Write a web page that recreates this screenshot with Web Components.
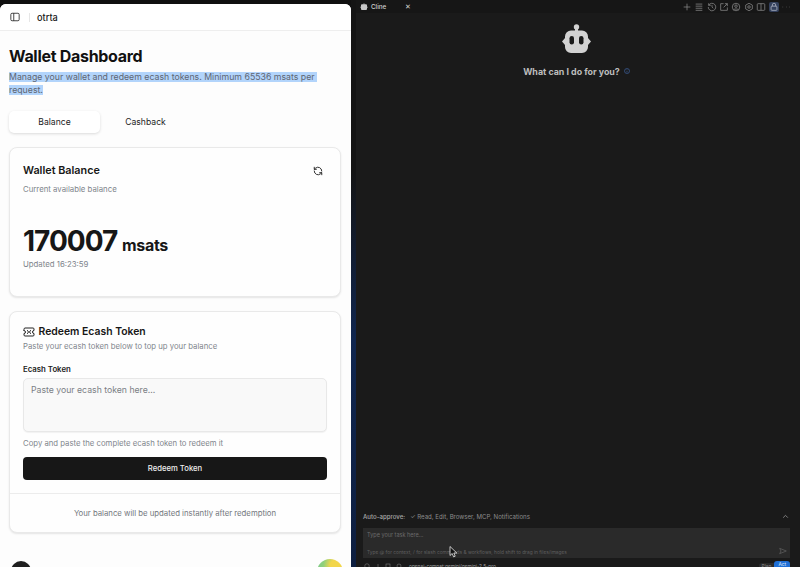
<!DOCTYPE html>
<html lang="en">
<head>
<meta charset="utf-8">
<title>Wallet Dashboard</title>
<style>
  html, body { margin: 0; height: 100%; background: #141414; overflow: hidden; }
  body { font-family: Inter, "Liberation Sans", sans-serif; }
</style>
</head>
<body>
<app-shell>
  <wallet-page slot="left">
    <wallet-header></wallet-header>
    <wallet-title></wallet-title>
    <wallet-tabs></wallet-tabs>
    <balance-card></balance-card>
    <redeem-card></redeem-card>
    <wallet-foot></wallet-foot>
  </wallet-page>
  <cline-panel slot="right">
    <cline-tabbar></cline-tabbar>
    <cline-welcome></cline-welcome>
    <cline-composer></cline-composer>
  </cline-panel>
</app-shell>
<script>
// each element is just a shadow root with a fixed template
function define(name, html) {
  const template = document.createElement('template');
  template.innerHTML = html;
  customElements.define(name, class extends HTMLElement {
    constructor() {
      super();
      this.attachShadow({ mode: 'open' });
      this.shadowRoot.appendChild(template.content.cloneNode(true));
    }
  });
}

define('app-shell', `
  <style>
    :host { display: flex; width: 800px; height: 567px; overflow: hidden; position: relative; background: #101010; }
    .left { width: 351px; padding-top: 4px; flex: none; box-sizing: border-box; }
    .gap { width: 5px; flex: none; background: linear-gradient(#141414 0, #141414 30%, #10264f 60%, #0e1f40 100%); }
    .right { flex: 1; min-width: 0; }
    svg { position: absolute; left: 449px; top: 546px; }
  </style>
  <div class="left"><slot name="left"></slot></div>
  <div class="gap"></div>
  <div class="right"><slot name="right"></slot></div>
  <svg width="9" height="12" viewBox="0 0 9 12"><path d="M1 0.5v9l2.2-2 1.4 3.4 1.6-.7-1.4-3.2h3z" fill="#111" stroke="#eee" stroke-width=".8"/></svg>
`);

define('wallet-page', `
  <style>
    :host { display: block; height: 563px; background: #fdfdfd; border-radius: 6px 6px 0 0; overflow: hidden; color: #171717; }
  </style>
  <slot></slot>
`);

define('wallet-header', `
  <style>
    :host { display: flex; align-items: center; height: 26px; border-bottom: 1px solid #eeeeee; padding-left: 10px; background: #fff; }
    svg { width: 10px; height: 10px; display: block; }
    i { width: 1px; height: 9px; background: #e6e6e6; margin: 0 7px 0 9px; }
    span { font-size: 9.2px; font-weight: 500; }
  </style>
  <svg viewBox="0 0 24 24" fill="none" stroke="#222" stroke-width="2"><rect x="2" y="3" width="20" height="18" rx="3"/><path d="M9 3v18"/></svg>
  <i></i><span>otrta</span>
`);

define('wallet-title', `
  <style>
    :host { display: block; padding: 14px 9px 0; }
    h1 { margin: 0; font-size: 16px; line-height: 22px; font-weight: 700; letter-spacing: -.3px; color: #111; }
    p { margin: 4px 0 0; font-size: 8.75px; line-height: 13px; color: #5f6672; width: 325px; }
    span { background: #b2d4fb; }
    .first { padding-right: 2px; }
  </style>
  <h1>Wallet Dashboard</h1>
  <p><span class="first">Manage your wallet and redeem ecash tokens. Minimum 65536 msats per</span> <span>request.</span></p>
`);

define('wallet-tabs', `
  <style>
    :host { display: flex; margin: 14px 9px 13.5px; font-size: 8.6px; color: #222; }
    div { width: 91px; height: 22px; display: flex; align-items: center; justify-content: center; border-radius: 5px; }
    .on { background: #fff; box-shadow: 0 1px 3px rgba(0,0,0,.14); }
  </style>
  <div class="on">Balance</div><div>Cashback</div>
`);

define('ui-card', `
  <style>
    :host { display: block; margin: 0 10px 14px 9px; border: 1px solid #e9e9e9; border-radius: 8px; background: #fefefe; box-shadow: 0 1px 2px rgba(0,0,0,.1); box-sizing: border-box; }
  </style>
  <slot></slot>
`);

define('balance-card', `
  <style>
    :host { display: block; }
    .in { height: 148px; padding: 15px 14px 0 13px; box-sizing: border-box; }
    .top { display: flex; justify-content: space-between; align-items: center; height: 16px; }
    h2 { margin: 0; font-size: 10.8px; font-weight: 600; }
    svg { width: 10px; height: 10px; margin-right: 3px; }
    p { margin: 0; font-size: 7.8px; color: #80858c; }
    .sub { margin-top: 4px; line-height: 12px; }
    .amount { margin-top: 31px; font-size: 28px; line-height: 30px; font-weight: 700; letter-spacing: -1px; color: #171717; }
    .amount small { font-size: 16px; letter-spacing: -.3px; margin-left: -1px; }
    .upd { line-height: 12px; margin-top: -2px; }
  </style>
  <ui-card>
    <div class="in">
      <div class="top">
        <h2>Wallet Balance</h2>
        <svg viewBox="0 0 24 24" fill="none" stroke="#222" stroke-width="2.2" stroke-linecap="round" stroke-linejoin="round"><path d="M21 12a9 9 0 0 0-15-6.700L3 8"/><path d="M3 3v5h5"/><path d="M3 12a9 9 0 0 0 15 6.700l3-2.700"/><path d="M16 16h5v5"/></svg>
      </div>
      <p class="sub">Current available balance</p>
      <div class="amount">170007 <small>msats</small></div>
      <p class="upd">Updated 16:23:59</p>
    </div>
  </ui-card>
`);

define('redeem-card', `
  <style>
    :host { display: block; }
    .in { padding: 13px 13px 13px; }
    .top { display: flex; align-items: center; gap: 4px; height: 14px; }
    svg { width: 12px; height: 12px; margin-left: -.5px; }
    h2 { margin: 0; font-size: 10.4px; font-weight: 600; }
    p { margin: 0; font-size: 7.75px; color: #80858c; }
    .sub { line-height: 12px; margin-top: 1px; }
    label { display: block; font-size: 7.8px; font-weight: 600; line-height: 12px; margin-top: 11px; color: #222; }
    .area { height: 54px; box-sizing: border-box; margin-top: 3px; padding: 5px 7px; border: 1px solid #e8e8e8; border-radius: 5px; background: #f9f9f9; box-shadow: 0 1px 1px rgba(0,0,0,.05); font-size: 8.7px; line-height: 13px; color: #7b7f85; }
    .help { line-height: 12px; margin-top: 5px; }
    .btn { display: flex; align-items: center; justify-content: center; height: 23px; margin-top: 8px; border-radius: 4px; background: #171717; color: #eee; font-size: 7.7px; font-weight: 500; }
    .foot { border-top: 1px solid #ececec; height: 39px; padding-top: 1px; box-sizing: border-box; display: flex; align-items: center; justify-content: center; font-size: 7.77px; color: #73777d; }
  </style>
  <ui-card>
    <div class="in">
      <div class="top">
        <svg viewBox="0 0 24 24" fill="none" stroke="#222" stroke-width="2" stroke-linecap="round" stroke-linejoin="round"><path d="M2 9a3 3 0 0 1 0 6v3a2 2 0 0 0 2 2h16a2 2 0 0 0 2-2v-3a3 3 0 0 1 0-6V6a2 2 0 0 0-2-2H4a2 2 0 0 0-2 2z"/><path d="M9 9l2 3-2 3M15 9l-2 3 2 3"/></svg>
        <h2>Redeem Ecash Token</h2>
      </div>
      <p class="sub">Paste your ecash token below to top up your balance</p>
      <label>Ecash Token</label>
      <div class="area">Paste your ecash token here...</div>
      <p class="help">Copy and paste the complete ecash token to redeem it</p>
      <div class="btn">Redeem Token</div>
    </div>
    <div class="foot">Your balance will be updated instantly after redemption</div>
  </ui-card>
`);

define('wallet-foot', `
  <style>
    :host { display: flex; justify-content: space-between; padding: 14px 8px 0 11px; }
    i { width: 20px; height: 20px; border-radius: 50%; background: #202020; }
    b { width: 26px; height: 26px; border-radius: 50%; margin-top: -2px; background: radial-gradient(circle at 75% 25%, #f2d64b 0 22%, #8fd07a 48%, #6cc4a0 100%); }
  </style>
  <i></i><b></b>
`);

define('cline-panel', `
  <style>
    :host { display: flex; flex-direction: column; height: 567px; background: #1a1a1a; color: #ccc; }
  </style>
  <slot></slot>
`);

define('cline-tabbar', `
  <style>
    :host { display: flex; align-items: center; height: 13px; padding-left: 4px; background: #161616; font-size: 6.3px; color: #d0d0d0; }
    .tab { display: flex; align-items: center; gap: 3px; width: 52px; height: 13px; font-weight: 500; position: relative; }
    .tab svg { width: 8px; height: 8px; }
    .x { position: absolute; left: 45px; font-size: 7px; }
    .tools { margin-left: auto; display: flex; align-items: center; gap: 2.4px; padding-right: 9px; }
    .tools svg { width: 10px; height: 10px; stroke: #8a8a8a; fill: none; stroke-width: 1.8; display: block; }
    .tools .on { background: #33405c; border-radius: 2px; }
    .tools .on svg { stroke: #b6bccb; }
  </style>
  <div class="tab">
    <svg viewBox="0 0 24 24" fill="#c8c8c8"><path d="M11 1h2v3h5a3 3 0 0 1 3 3v3l2 3-2 3v2a3 3 0 0 1-3 3H6a3 3 0 0 1-3-3v-2l-2-3 2-3V7a3 3 0 0 1 3-3h5z"/></svg>
    <span>Cline</span><span class="x">✕</span>
  </div>
  <div class="tools">
    <svg viewBox="0 0 24 24"><path d="M12 4v16M4 12h16"/></svg>
    <svg viewBox="0 0 24 24"><path d="M4 5h16M4 10h16M4 15h16M4 20h16"/></svg>
    <svg viewBox="0 0 24 24"><path d="M4 8a9 9 0 1 1-1 4M4 3v5h5M12 7v5l3 3"/></svg>
    <svg viewBox="0 0 24 24"><path d="M20 13v7H4V4h7M14 4h6v6M20 4l-9 9"/></svg>
    <svg viewBox="0 0 24 24"><circle cx="12" cy="12" r="9"/><circle cx="12" cy="10" r="3"/><path d="M6 19c1-3 11-3 12 0"/></svg>
    <svg viewBox="0 0 24 24"><path d="M12 3l8 4.500v9L12 21l-8-4.500v-9z"/><circle cx="12" cy="12" r="3"/></svg>
    <svg viewBox="0 0 24 24"><rect x="3" y="4" width="18" height="16" rx="2"/><path d="M12 4v16"/></svg>
    <span class="on"><svg viewBox="0 0 24 24"><rect x="5" y="10" width="14" height="10" rx="2"/><path d="M8 10V7a4 4 0 0 1 8 0v3"/></svg></span>
    <svg viewBox="0 0 24 24"><path d="M4 12h1M12 12h1M20 12h1"/></svg>
  </div>
`);

define('cline-welcome', `
  <style>
    :host { flex: 1; display: flex; flex-direction: column; align-items: center; padding: 11px 3px 0 0; }
    svg { width: 30px; height: 30px; display: block; }
    p { margin: 10.5px 0 0; display: flex; align-items: center; gap: 4px; font-size: 8.9px; line-height: 13px; font-weight: 700; color: #bdbdbd; }
    p svg { width: 6px; height: 6px; }
  </style>
  <svg viewBox="0 0 30 30"><circle cx="14.500" cy="3" r="2.700" fill="#d2d2d2"/><path fill="#d2d2d2" d="M13 4h3v3h-3z"/><path fill="#d2d2d2" d="M9 6.500h11a6 6 0 0 1 6 6v1.500l3 3.500-3 3.500v2a6 6 0 0 1-6 6H9a6 6 0 0 1-6-6v-2L0 17.500 3 14v-1.500a6 6 0 0 1 6-6z"/><rect x="7.500" y="12" width="4.500" height="8.500" rx="2.250" fill="#1a1a1a"/><rect x="17" y="12" width="4.500" height="8.500" rx="2.250" fill="#1a1a1a"/></svg>
  <p>What can I do for you? <svg viewBox="0 0 12 12" fill="none" stroke="#4a7bc8"><circle cx="6" cy="6" r="5"/><path d="M6 5.500V9M6 3v1"/></svg></p>
`);

define('cline-composer', `
  <style>
    :host { display: block; font-size: 6.1px; color: #7e7e7e; position: relative; }
    .auto { display: flex; align-items: center; height: 24px; padding: 0 11px 0 7px; color: #8c8c8c; }
    .auto b { font-weight: 500; color: #a8a8a8; margin-right: 5px; }
    .auto svg { margin-left: auto; width: 7px; height: 7px; }
    .box { margin: 0 10px 0 6.5px; height: 30px; background: #2a2a2a; padding: 4px 4.500px 0; box-sizing: border-box; position: relative; color: #6a6a6a; font-size: 5.5px; }
    .hint { position: absolute; left: 4.500px; bottom: 3px; font-size: 4.82px; color: #5f5f5f; }
    .box svg { position: absolute; right: 3px; bottom: 3px; width: 8px; height: 8px; }
    .bottom { display: flex; align-items: center; height: 9px; margin: 3px 0 -3px; padding: 0 10px 0 8px; overflow: hidden; font-size: 4.8px; }
    .bottom svg { width: 6px; height: 6px; stroke: #8a8a8a; fill: none; margin-right: 4.5px; flex: none; }
    .model { margin-left: 3px; color: #a0a0a0; }
    .plan { margin-left: auto; color: #888; padding: 0 3px; background: #2a2a2a; border-radius: 5px 0 0 5px; }
    .act { background: #1f6fd6; color: #dfe9f7; padding: 0 4px; border-radius: 3px 3px 0 0; height: 9px; }
  </style>
  <div class="auto"><b>Auto-approve:</b> ✓ Read, Edit, Browser, MCP, Notifications
    <svg viewBox="0 0 12 12" fill="none" stroke="#8c8c8c" stroke-width="1.5"><path d="M2 8l4-4 4 4"/></svg></div>
  <div class="box">Type your task here...
    <span class="hint">Type @ for context, / for slash commands &amp; workflows, hold shift to drag in files/images</span>
    <svg viewBox="0 0 12 12" fill="none" stroke="#666"><path d="M1 2l10 4-10 4 2-4z"/></svg>
  </div>
  <div class="bottom">
    <svg viewBox="0 0 12 12"><circle cx="6" cy="6" r="4.500"/></svg>
    <svg viewBox="0 0 12 12"><path d="M6 2v8"/></svg>
    <svg viewBox="0 0 12 12"><rect x="2" y="2" width="8" height="8"/></svg>
    <svg viewBox="0 0 12 12"><circle cx="6" cy="6" r="4"/></svg>
    <span class="model">openai-compat:gemini/gemini-2.5-pro</span><span class="plan">Plan</span><span class="act">Act</span>
  </div>
`);
</script>
</body>
</html>
